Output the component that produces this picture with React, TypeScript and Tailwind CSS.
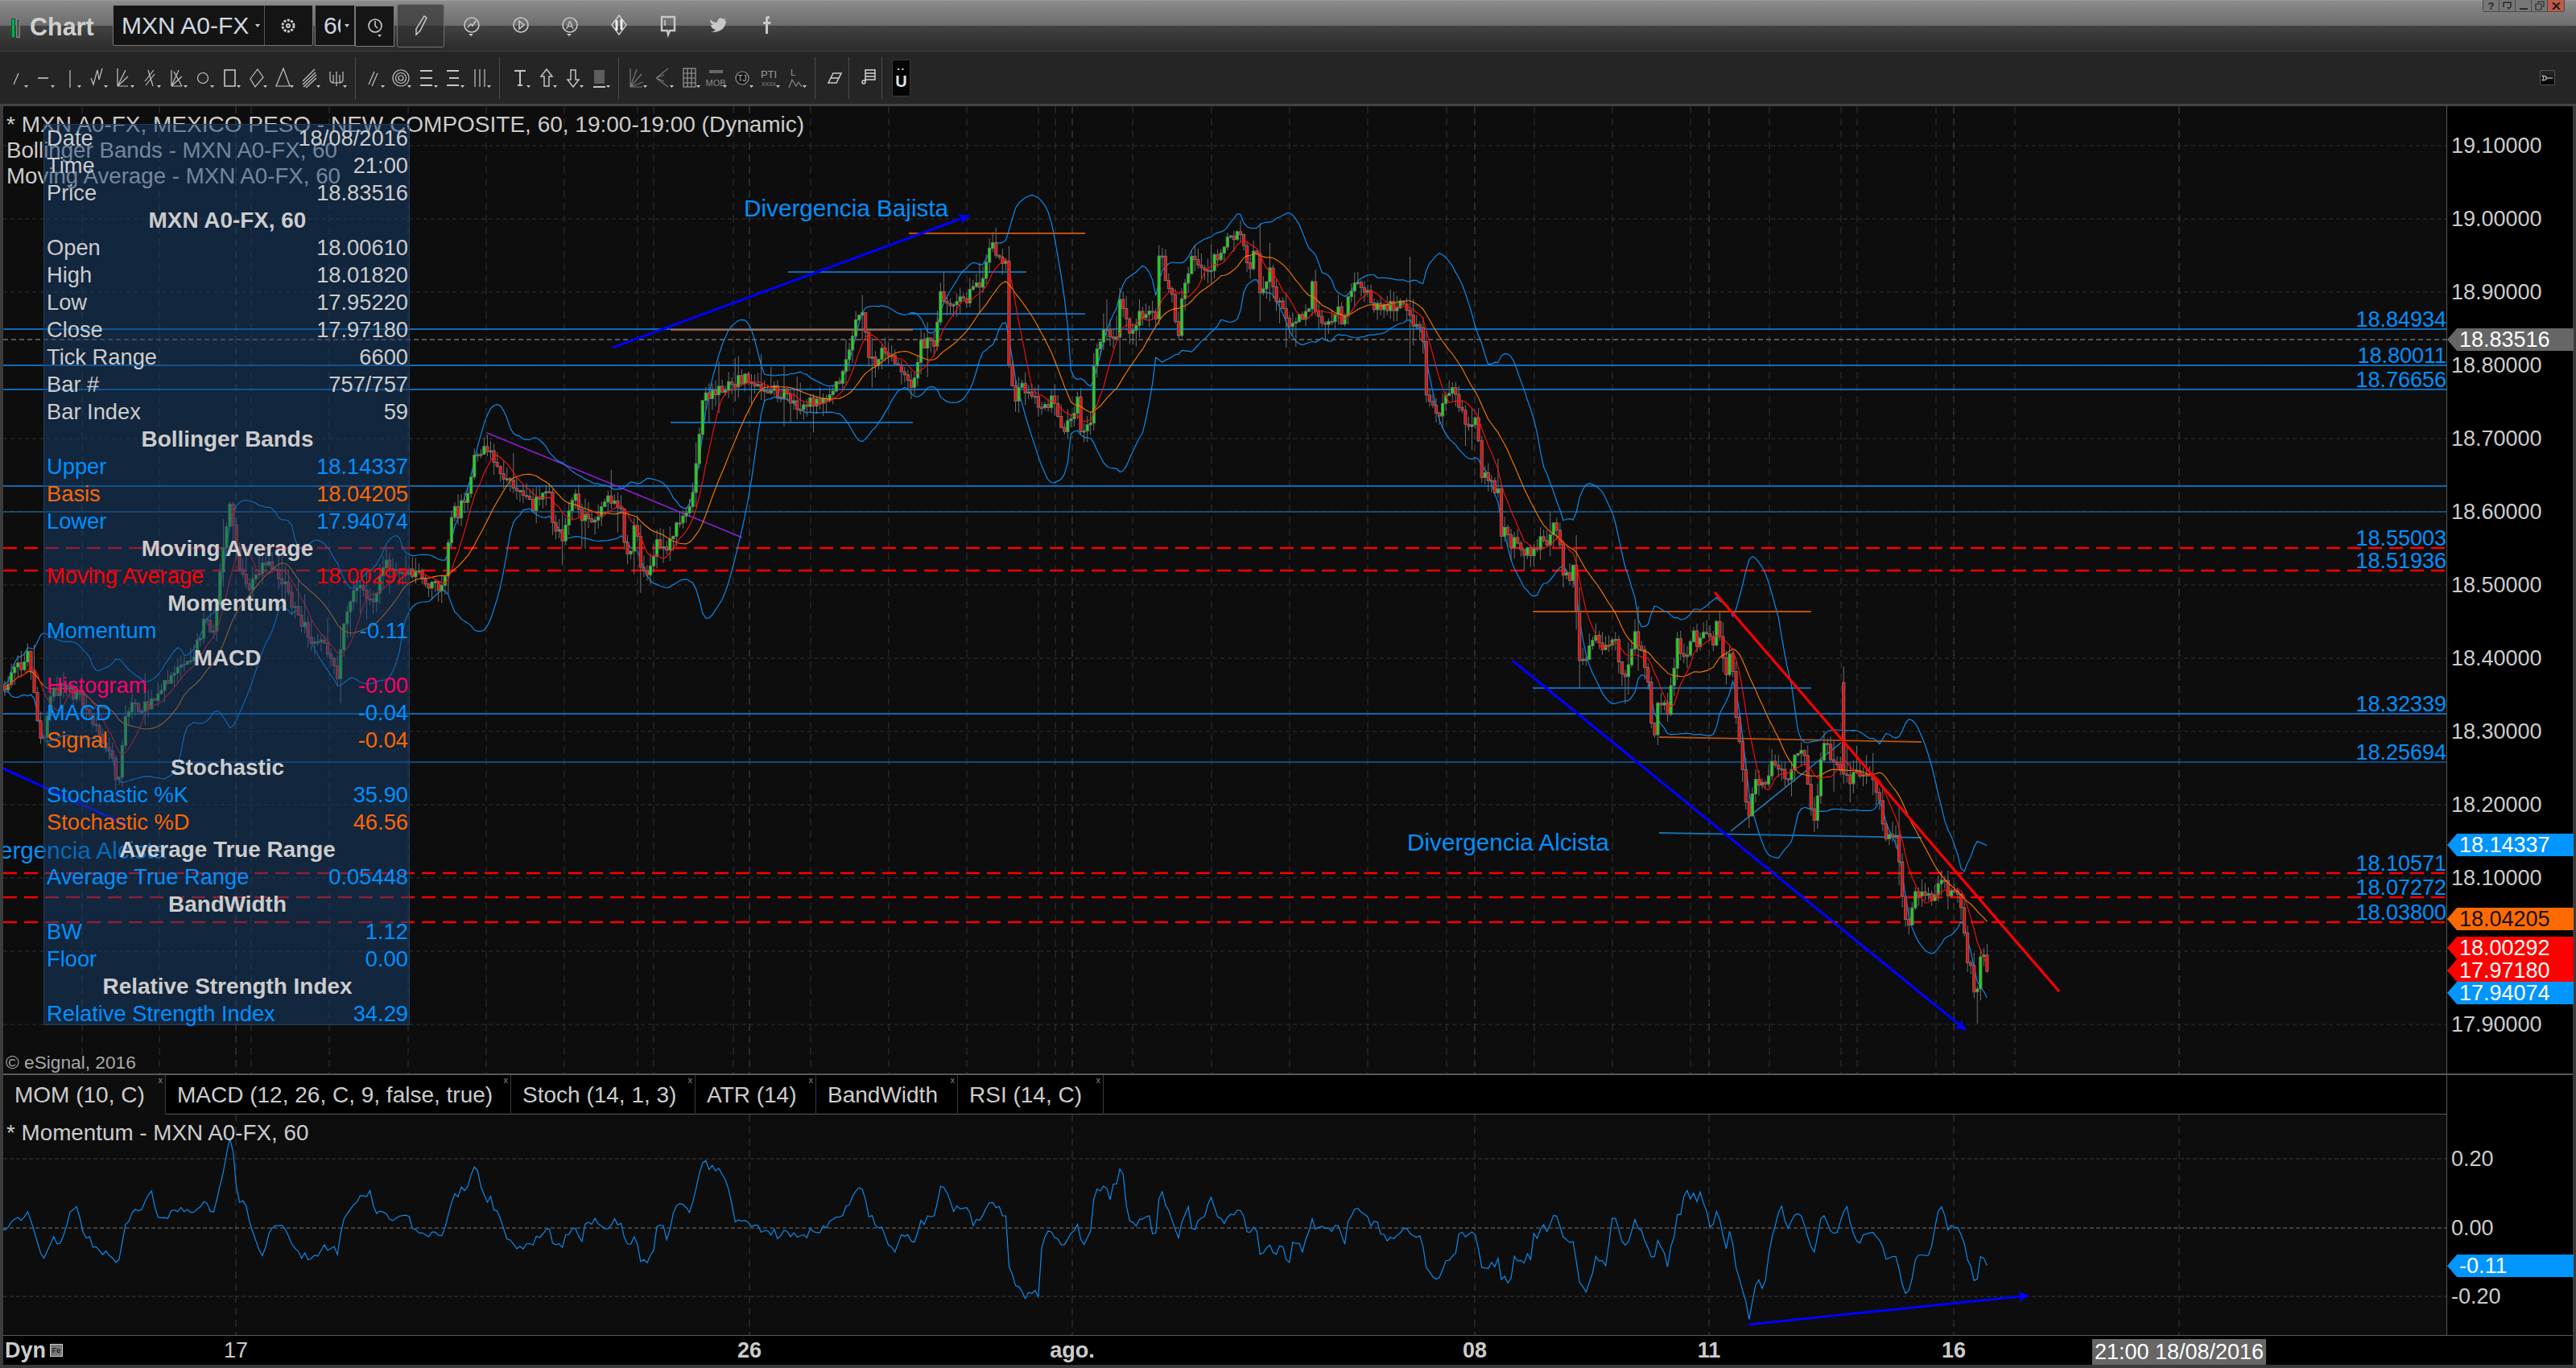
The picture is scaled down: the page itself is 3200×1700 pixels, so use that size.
import React from 'react';

// Close price, read off the picture as [screen x, screen y]
const WAYPOINTS: [number, number][] = [
  [0,860],[8,855],[18,835],[35,815],[45,880],[52,925],[60,880],[65,860],[80,855],[100,870],[128,920],[140,950],[146,975],[157,880],[175,880],[190,870],[205,850],[222,825],[235,830],[255,770],[265,790],[270,740],[286,625],[295,700],[310,730],[330,700],[350,720],[370,765],[390,800],[400,790],[420,840],[430,760],[445,720],[460,750],[480,700],
  [507,710],[520,715],[533,725],[543,730],[553,720],[558,670],[562,625],[570,640],[575,620],[580,615],[590,565],[595,565],[607,558],[612,565],[618,578],[627,590],[633,595],[640,610],[648,612],[655,620],[663,640],[667,620],[675,615],[680,600],[683,620],[688,660],[695,665],[700,670],[708,620],[717,620],[723,640],[730,650],[740,640],[750,625],[757,620],[765,625],[773,635],[777,695],[785,690],[790,627],[793,695],[802,720],[810,700],[817,670],[822,680],[833,675],[842,640],[850,650],[862,605],[867,560],[871,500],
  [880,490],[900,480],[925,470],[945,480],[960,485],[975,490],[995,505],[1005,500],[1013,498],[1028,503],[1036,487],[1048,462],[1056,433],[1064,397],[1074,385],[1076,428],[1084,453],[1094,437],[1107,443],[1122,460],[1135,482],[1143,427],[1153,427],[1163,428],[1166,363],[1173,377],[1184,373],[1201,370],[1219,353],[1230,302],[1240,317],[1250,330],[1253,443],[1260,507],[1268,467],[1276,487],[1286,497],[1298,510],[1309,495],[1321,533],[1332,527],[1339,497],[1344,543],[1355,523],[1360,437],[1365,422],[1372,408],[1388,418],[1390,373],[1403,410],[1413,395],[1423,387],[1436,398],[1438,327],[1446,318],[1449,358],[1459,367],[1462,443],[1467,370],[1472,347],[1480,322],[1490,337],[1503,343],[1508,315],[1518,317],[1523,300],[1536,288],[1543,297],[1551,338],[1559,300],[1566,363],[1577,335],[1587,377],[1602,402],[1625,392],[1629,347],[1635,392],[1648,402],[1655,405],[1661,370],[1668,410],[1673,378],[1681,355],[1699,363],[1709,383],[1724,382],[1740,380],[1753,400],[1767,415],[1773,500],[1778,495],[1783,517],[1790,508],[1802,483],[1807,482],[1812,513],[1818,518],[1827,527],[1835,520],[1840,587],[1852,595],[1855,625],[1860,588],[1863,667],[1872,657],[1877,683],[1885,668],[1893,683],[1903,692],[1913,672],[1920,683],[1932,648],[1937,675],[1940,703],
  [1952,732],[1954,698],[1961,812],[1970,827],[1974,803],[1979,792],[1994,807],[2005,783],[2012,835],[2019,843],[2030,785],[2039,807],[2046,840],[2051,898],[2057,913],[2059,870],[2072,882],[2078,843],[2083,787],[2090,822],[2095,813],[2104,780],[2110,807],[2117,775],[2128,800],[2133,767],[2139,810],[2144,833],[2150,813],[2157,890],[2161,923],[2168,988],[2173,1018],[2179,973],[2188,980],[2196,973],[2201,953],[2215,963],[2222,970],[2229,943],[2240,933],[2249,1000],[2255,1025],[2260,970],[2264,932],[2269,922],[2273,950],[2282,945],[2291,962],[2298,973],[2309,952],[2314,970],[2327,965],[2334,995],[2340,1038],[2357,1045],[2362,1112],[2370,1148],[2375,1130],[2379,1113],[2403,1113],[2412,1092],[2420,1110],[2429,1105],[2438,1128],[2443,1190],[2448,1203],[2452,1237],[2457,1222],[2461,1178],[2468,1207],
];

const STEP = 4.05;
const BAR_COUNT = 610;

let seed = 4711;
const rnd = () => {
  seed = (seed * 1664525 + 1013904223) % 4294967296;
  return seed / 4294967296;
};

const interp = (x: number) => {
  for (let i = 1; i < WAYPOINTS.length; i++) {
    const [x1, y1] = WAYPOINTS[i];
    if (x <= x1) {
      const [x0, y0] = WAYPOINTS[i - 1];
      return y0 + ((y1 - y0) * (x - x0)) / (x1 - x0);
    }
  }
  return WAYPOINTS[WAYPOINTS.length - 1][1];
};

const barX = (i: number) => 2 + i * STEP;

const closes: number[] = [];
for (let i = 0; i < BAR_COUNT; i++) {
  closes.push(interp(barX(i)) + (i === BAR_COUNT - 1 ? 0 : (rnd() - 0.5) * 15));
}

const bars = closes.map((c, i) => {
  const x = barX(i);
  let o = i === 0 ? c + 4 : closes[i - 1];
  if (Math.abs(x - 2289) < 2.1) o = 848; // the long spike on the 11th
  const big = rnd() < 0.15;
  let hi = Math.min(o, c) - rnd() * (big ? 38 : 16);
  let lo = Math.max(o, c) + rnd() * (big ? 38 : 16);
  if (Math.abs(x - 1750) < 2.1) { hi = 319; lo = 452; }
  if (Math.abs(x - 2456) < 2.1) lo = 1272;
  return { x, o, c, hi, lo };
});

const sma = (i: number, n: number) => {
  const from = Math.max(0, i - n + 1);
  const part = closes.slice(from, i + 1);
  return part.reduce((a, b) => a + b, 0) / part.length;
};
const stdev = (i: number, n: number) => {
  const from = Math.max(0, i - n + 1);
  const part = closes.slice(from, i + 1);
  const m = sma(i, n);
  return Math.sqrt(part.reduce((a, b) => a + (b - m) * (b - m), 0) / part.length);
};

const toPoints = (fn: (i: number) => number) =>
  closes.map((_, i) => `${barX(i).toFixed(1)},${fn(i).toFixed(1)}`).join(' ');

const upperLine = toPoints((i) => sma(i, 20) - 2 * stdev(i, 20));
const lowerLine = toPoints((i) => sma(i, 20) + 2 * stdev(i, 20));
const basisLine = toPoints((i) => sma(i, 20));
const maLine = toPoints((i) => sma(i, 8));
// momentum of 10 bars; the spike on the 17th is taller than the closes give
const momLine = toPoints((i) => {
  const dx = barX(i) - 287;
  return 1526 + (closes[i] - closes[Math.max(0, i - 10)]) * 0.47 - 34 * Math.exp(-(dx * dx) / 40);
});

const PRICE_GRID = [181, 272, 363, 454, 545, 636, 727, 818, 909, 1000, 1091, 1182, 1273];
const V_MINOR = [102, 198, 312, 409, 507, 604, 701, 792, 812, 911, 1007, 1104, 1201, 1290, 1311, 1407, 1505, 1602, 1699, 1797, 1906, 2003, 2100, 2198, 2287, 2307, 2405, 2503];
const V_MAJOR = [293, 931, 1332, 1832, 2123, 2427, 2707];
const BLUE_LEVELS = [409, 454, 484, 604, 636, 887, 947];
const RED_LEVELS = [681, 709, 1085, 1115, 1146];

const PRICE_LABELS: [string, number][] = [
  ['19.10000', 181], ['19.00000', 272], ['18.90000', 363], ['18.80000', 454], ['18.70000', 545], ['18.60000', 636],
  ['18.50000', 727], ['18.40000', 818], ['18.30000', 909], ['18.20000', 1000], ['18.10000', 1091], ['17.90000', 1273],
];
const LEVEL_LABELS: [string, number][] = [
  ['18.84934', 409], ['18.80011', 454], ['18.76656', 484], ['18.55003', 681], ['18.51936', 709],
  ['18.32339', 887], ['18.25694', 947], ['18.10571', 1085], ['18.07272', 1115], ['18.03800', 1146],
];

type Row = { label: string; value?: string; color?: string; head?: boolean };

const PANEL_ROWS: Row[] = [
  { label: 'Date', value: '18/08/2016' },
  { label: 'Time', value: '21:00' },
  { label: 'Price', value: '18.83516' },
  { label: 'MXN A0-FX, 60', head: true },
  { label: 'Open', value: '18.00610' },
  { label: 'High', value: '18.01820' },
  { label: 'Low', value: '17.95220' },
  { label: 'Close', value: '17.97180' },
  { label: 'Tick Range', value: '6600' },
  { label: 'Bar #', value: '757/757' },
  { label: 'Bar Index', value: '59' },
  { label: 'Bollinger Bands', head: true },
  { label: 'Upper', value: '18.14337', color: 'text-[#0090ff]' },
  { label: 'Basis', value: '18.04205', color: 'text-[#ff6600]' },
  { label: 'Lower', value: '17.94074', color: 'text-[#0090ff]' },
  { label: 'Moving Average', head: true },
  { label: 'Moving Average', value: '18.00292', color: 'text-[#ff0000]' },
  { label: 'Momentum', head: true },
  { label: 'Momentum', value: '-0.11', color: 'text-[#0090ff]' },
  { label: 'MACD', head: true },
  { label: 'Histogram', value: '-0.00', color: 'text-[#ff0066]' },
  { label: 'MACD', value: '-0.04', color: 'text-[#0090ff]' },
  { label: 'Signal', value: '-0.04', color: 'text-[#ff6600]' },
  { label: 'Stochastic', head: true },
  { label: 'Stochastic %K', value: '35.90', color: 'text-[#0090ff]' },
  { label: 'Stochastic %D', value: '46.56', color: 'text-[#ff6600]' },
  { label: 'Average True Range', head: true },
  { label: 'Average True Range', value: '0.05448', color: 'text-[#0090ff]' },
  { label: 'BandWidth', head: true },
  { label: 'BW', value: '1.12', color: 'text-[#0090ff]' },
  { label: 'Floor', value: '0.00', color: 'text-[#0090ff]' },
  { label: 'Relative Strength Index', head: true },
  { label: 'Relative Strength Index', value: '34.29', color: 'text-[#0090ff]' },
];

const Arrow: React.FC<{ x1: number; y1: number; x2: number; y2: number }> = ({ x1, y1, x2, y2 }) => {
  const a = Math.atan2(y2 - y1, x2 - x1);
  const p = (d: number, s: number) =>
    `${x2 + Math.cos(a) * d - Math.sin(a) * s},${y2 + Math.sin(a) * d + Math.cos(a) * s}`;
  return (
    <g>
      <line x1={x1} y1={y1} x2={x2} y2={y2} stroke="#0000ff" strokeWidth={3.2} />
      <polygon points={`${p(0, 0)} ${p(-13, -7)} ${p(-9, 0)} ${p(-13, 7)}`} fill="#0000ff" />
    </g>
  );
};

const Flag: React.FC<{ text: string; y: number; color: string }> = ({ text, y, color }) => (
  <div
    className={`absolute left-0 w-[157px] h-[28px] pl-[15px] flex items-center text-[27px] leading-none [clip-path:polygon(12px_0,100%_0,100%_100%,12px_100%,0_50%)] ${color}`}
    style={{ top: y }}
  >
    {text}
  </div>
);

const Tool: React.FC<{ children: React.ReactNode; arrow?: boolean }> = ({ children, arrow = true }) => (
  <svg width={33} height={40} viewBox="0 0 33 40" fill="none" stroke="#c4c4c4" strokeWidth={1.2} className="shrink-0">
    {children}
    {arrow && <path d="M22 29h5l-2.500 3z" fill="#cccccc" stroke="none" />}
  </svg>
);

const Sep: React.FC = () => <div className="w-px h-[52px] bg-[#4d4d4d] mx-[4px] shrink-0" />;

const TopIcon: React.FC<{ children: React.ReactNode; arrow?: boolean }> = ({ children, arrow = true }) => (
  <svg width={61} height={44} viewBox="0 0 61 44" fill="none" stroke="#c8c8c8" strokeWidth={1.6} className="shrink-0">
    {children}
    {arrow && <path d="M26 33h6l-3 3z" fill="#cccccc" stroke="none" />}
  </svg>
);

const App: React.FC = () => {
  return (
    <div className="w-[3200px] h-[1700px] flex flex-col bg-[#3a3a3a] overflow-hidden [font-family:'Liberation_Sans',Arial,sans-serif] text-[#cccccc]">
      {/* Window title bar */}
      <div className="relative h-[63px] shrink-0 flex items-start pt-[5px] pl-[14px] border-t border-[#9a9a9a] bg-[linear-gradient(#8c8c8c_0,#6c6c6c_50%,#424242_50%,#2b2b2b_100%)]">
        <div className="w-[5px] h-[24px] mt-[17px] bg-[#00b050] border border-[#0a5a2a]" />
        <div className="w-[5px] h-[24px] mt-[17px] ml-px bg-[#555555] border border-[#888888]" />
        <div className="ml-[12px] mt-[10px] w-[103px] text-[30.500px] leading-[34px] font-bold text-[#d0d0d0]">Chart</div>
        <div className="flex items-center w-[249px] h-[51px] bg-[#141414] border border-[#777777] rounded-[2px]">
          <span className="ml-[10px] w-[160px] text-[30px] leading-none text-[#cfd8e0] whitespace-nowrap">MXN A0-FX</span>
          <svg width={6} height={4} viewBox="0 0 6 4" className="ml-[6px]"><path d="M0 0h6L3 4z" fill="#cccccc" /></svg>
          <div className="ml-[5px] w-px h-full bg-[#555555]" />
          <svg width={58} height={30} viewBox="0 0 58 30" fill="none" stroke="#cccccc" strokeWidth={2}>
            <circle cx={29} cy={15} r={7} strokeDasharray="3 1.500" strokeWidth={3} />
            <circle cx={29} cy={15} r={2} />
          </svg>
        </div>
        <div className="ml-[2px] flex items-center w-[50px] h-[51px] bg-[#141414] border border-[#777777] overflow-hidden">
          <span className="ml-[10px] w-[21px] overflow-hidden text-[30px] leading-none text-[#cfd8e0]">60</span>
          <svg width={6} height={4} viewBox="0 0 6 4" className="ml-[5px]"><path d="M0 0h6L3 4z" fill="#cccccc" /></svg>
        </div>
        <div className="flex items-center justify-center w-[49px] h-[51px] mt-px bg-[#161616] border border-[#777777]">
          <svg width={22} height={28} viewBox="0 0 22 28" fill="none" stroke="#cccccc" strokeWidth={1.6}>
            <circle cx={11} cy={13} r={8} />
            <path d="M11 7v6l3 3" />
            <path d="M14 24h5l-2.500 3z" fill="#cccccc" stroke="none" />
          </svg>
        </div>
        <div className="ml-[3px] flex items-center justify-center w-[59px] h-[54px] -mt-px rounded-[3px] border border-[#707070] bg-[linear-gradient(#4d4d4d_0,#474747_50%,#343434_50%,#2c2c2c_100%)]">
          <svg width={18} height={30} viewBox="0 0 18 30" fill="none" stroke="#d0d0d0" strokeWidth={1.4}>
            <path d="M13 3l3 2-8 16-5 5 0-7z" />
          </svg>
        </div>
        <div className="ml-[4px] flex items-center h-[44px] mt-[3px]">
          <TopIcon>
            <circle cx={30} cy={22} r={9} />
            <path d="M25 25l4-4 2 2 4-6" />
          </TopIcon>
          <TopIcon arrow={false}>
            <circle cx={30} cy={22} r={9} />
            <path d="M28 17l6 5-6 5z" />
          </TopIcon>
          <TopIcon>
            <circle cx={30} cy={22} r={9} />
            <text x={30} y={27} textAnchor="middle" fontSize={14} fill="#c8c8c8" stroke="none">A</text>
          </TopIcon>
          <TopIcon arrow={false}>
            <path d="M30 10l9 12-9 12-9-12z" />
            <path d="M27 16v13M33 15v13" stroke="#eeeeee" strokeWidth={3} />
          </TopIcon>
          <TopIcon arrow={false}>
            <path d="M22 12h16v17h-6l-2 5-1-5h-7z" strokeWidth={2.4} />
            <path d="M26 16v7" />
          </TopIcon>
          <TopIcon arrow={false}>
            <path d="M21 15c3 3 6 4 9 4 0-5 5-7 8-4l3-1-2 3 2 0c-1 9-7 15-20 14 3 0 5-1 7-3-4-1-6-4-6-6l3 0c-3-2-4-4-4-7z" fill="#c8c8c8" stroke="none" />
          </TopIcon>
          <TopIcon arrow={false}>
            <path d="M34 11h-2c-2 0-3 1-3 3v4h-3v3h3v12h3V21h3l.5-3H32v-3c0-1 .5-1 2-1z" fill="#c8c8c8" stroke="none" />
          </TopIcon>
        </div>
        {/* window buttons */}
        <div className="absolute top-[-1px] right-[14px] flex h-[15px] rounded-b-[3px] overflow-hidden border border-t-0 border-[#4a4a4a] text-[#2a2a2a]">
          <div className="w-[20px] flex items-center justify-center bg-[#777777] border-r border-[#4a4a4a] text-[13px] font-bold leading-none">?</div>
          <div className="w-[20px] flex items-center justify-center bg-[#777777] border-r border-[#4a4a4a]">
            <svg width={11} height={10} viewBox="0 0 11 10" fill="none" stroke="#2a2a2a" strokeWidth={1.5}><path d="M1 7V1h9v6" /><path d="M5 7h5l-2.500 3z" fill="#2a2a2a" stroke="none" /></svg>
          </div>
          <div className="w-[20px] flex items-end justify-center pb-[2px] bg-[#777777] border-r border-[#4a4a4a]">
            <div className="w-[10px] h-[2px] bg-[#2a2a2a]" />
          </div>
          <div className="w-[20px] flex items-center justify-center bg-[#777777] border-r border-[#4a4a4a]">
            <svg width={12} height={12} viewBox="0 0 12 12" fill="none" stroke="#2a2a2a" strokeWidth={1.2}><path d="M4 3V1h7v6H9" /><path d="M1 4h7v7H1z" /></svg>
          </div>
          <div className="w-[20px] flex items-center justify-center bg-[#c05a48] text-[#1f1f1f]">
            <svg width={11} height={9} viewBox="0 0 11 9" fill="none" stroke="#222222" strokeWidth={2.2}><path d="M1 0l9 9M10 0L1 9" /></svg>
          </div>
        </div>
      </div>

      {/* Drawing toolbar */}
      <div className="h-[66px] shrink-0 flex items-center pl-[8px] border-t border-[#444444] bg-[#252525]">
        <Tool><path d="M9 28l6-14" /></Tool>
        <Tool><path d="M6 20h13" strokeWidth={1.6} /></Tool>
        <Tool><path d="M13 10v22" /></Tool>
        <Tool><path d="M6 20l3 8 5-18 2 12 4-14" /></Tool>
        <Tool><path d="M6 30l10-20M6 30l13-12M6 30h13" /><path d="M6 8v22" /></Tool>
        <Tool><path d="M7 24l11-14M8 29l11-14M11 10l6 20" /></Tool>
        <Tool><path d="M7 30l9-20M7 30l13-12M7 30h13M7 10v20M10 12l10 18" /></Tool>
        <Tool><circle cx={13} cy={20} r={6.500} /></Tool>
        <Tool><rect x={7} y={10} width={13} height={20} strokeWidth={1.6} /></Tool>
        <Tool><path d="M15 9l7 10-10 12-6-10z" /></Tool>
        <Tool><path d="M14 8l8 22H5z" /></Tool>
        <Tool><path d="M5 24L20 9M5 28L21 13M6 31L22 16M9 32L22 20" /></Tool>
        <Tool><path d="M6 12v10c0 2 2 4 4 4h8c2 0 4-2 4-4V12M14 12v18M10 16v10M18 16v10" /></Tool>
        <Sep />
        <div className="w-[5px] shrink-0" />
        <Tool><path d="M7 28l7-16M11 30l7-16" /></Tool>
        <Tool><circle cx={14} cy={20} r={10} /><circle cx={14} cy={20} r={6.500} /><circle cx={14} cy={20} r={3} /></Tool>
        <Tool><path d="M5 11h15M5 20h15M5 29h15" strokeWidth={1.8} /></Tool>
        <Tool><path d="M5 11h15M8 20h12M5 29h15" strokeWidth={1.8} /></Tool>
        <Tool><path d="M7 9v22M13 9v22M19 9v22" /></Tool>
        <Sep />
        <div className="w-[7px] shrink-0" />
        <Tool><path d="M7 11h14M14 11v18M11 29h6" strokeWidth={2} /></Tool>
        <Tool><path d="M14 9l7 9h-4v12h-6V18H7z" strokeWidth={1.5} /></Tool>
        <Tool><path d="M14 31l7-9h-4V10h-6v12H7z" strokeWidth={1.5} /></Tool>
        <Tool><rect x={7} y={10} width={13} height={17} fill="#5e5e5e" stroke="none" /><path d="M6 31h15" strokeWidth={2} /></Tool>
        <Sep />
        <div className="w-[4px] shrink-0" />
        <Tool><g stroke="#777777"><path d="M6 8v23h15M6 31l8-22M6 31l14-16M6 31l16-6" /></g></Tool>
        <Tool><g stroke="#777777"><path d="M5 20L20 8M5 20l15 11M5 20l10-4M5 20l10 4" /></g></Tool>
        <Tool><g stroke="#999999"><rect x={6} y={8} width={15} height={23} /><path d="M6 14h15M6 20h15M6 26h15M11 8v23M16 8v23" /></g></Tool>
        <Tool>
          <rect x={5} y={10} width={17} height={4} fill="#666666" stroke="none" />
          <text x={13} y={30} textAnchor="middle" fontSize={11} fill="#8a8a8a" stroke="none">MOB</text>
        </Tool>
        <Tool>
          <circle cx={13} cy={20} r={8} fill="#141414" stroke="#999999" />
          <text x={13} y={24} textAnchor="middle" fontSize={10} fill="#bbbbbb" stroke="none">TJ</text>
        </Tool>
        <Tool>
          <text x={13} y={20} textAnchor="middle" fontSize={13} fill="#999999" stroke="none">PTI</text>
          <text x={13} y={30} textAnchor="middle" fontSize={9} fill="#777777" stroke="none">xxxx</text>
        </Tool>
        <Tool>
          <text x={7} y={17} fontSize={11} fill="#999999" stroke="none">L</text>
          <g stroke="#888888"><path d="M5 32l4-10 5 8 3-5 4 6" /></g>
        </Tool>
        <Sep />
        <svg width={22} height={40} viewBox="0 0 22 40" fill="none" stroke="#c8c8c8" strokeWidth={1.6} className="shrink-0 ml-[9px] mr-[2px]">
          <path d="M3 26l6-12h10l-6 12z" /><path d="M6 20h10" />
        </svg>
        <Sep />
        <svg width={24} height={40} viewBox="0 0 24 40" fill="none" stroke="#d8d8d8" strokeWidth={1.4} className="shrink-0 ml-[8px]">
          <path d="M8 10h12v12H8zM8 14h12M8 18h12" /><circle cx={6} cy={25} r={2} /><path d="M8 24v-3" />
        </svg>
        <Sep />
        <div className="ml-[8px] w-[23px] h-[46px] flex flex-col items-center justify-center rounded-[2px] border border-[#3a3a3a] bg-[#050505] text-[20px] font-bold text-[#e0e0e0]">
          <span className="text-[13px] leading-[8px] tracking-[1px]">··</span>
          <span className="leading-[22px]">U</span>
        </div>
        <div className="ml-auto mr-[26px] w-[19px] h-[19px] flex items-center justify-center rounded-[2px] border border-[#555555] bg-[linear-gradient(#2a2a2a,#000000)]">
          <svg width={15} height={10} viewBox="0 0 15 10" fill="none" stroke="#dddddd" strokeWidth={1}><path d="M1 2l5 1v4L1 8l2-3zM6 5h8" /></svg>
        </div>
      </div>

      <div className="h-[3px] shrink-0 bg-[#444444]" />

      <div className="flex-1 flex flex-col border-x-4 border-[#3c3c3c] min-h-0">
        {/* Price pane */}
        <div className="h-[1202px] shrink-0 flex">
          <div className="relative w-[3035px] h-full overflow-hidden bg-[#0d0d0d]">
            <svg width={3035} height={1202} viewBox="4 132 3035 1202" className="block">
              {PRICE_GRID.map((y) => (
                <line key={y} x1={4} x2={3039} y1={y} y2={y} stroke="#303030" strokeWidth={1} strokeDasharray="5 4" />
              ))}
              {V_MINOR.map((x) => (
                <line key={x} x1={x} x2={x} y1={132} y2={1334} stroke="#333333" strokeWidth={1} strokeDasharray="9 6" />
              ))}
              {V_MAJOR.map((x) => (
                <line key={x} x1={x} x2={x} y1={132} y2={1334} stroke="#484848" strokeWidth={1} strokeDasharray="9 6" />
              ))}
              <line x1={4} x2={3039} y1={422} y2={422} stroke="#707070" strokeWidth={1.4} strokeDasharray="6 4" />
              {BLUE_LEVELS.map((y) => (
                <line key={y} x1={4} x2={3039} y1={y} y2={y} stroke={y === 636 ? '#1f7fc8' : '#0a8af0'} strokeWidth={y === 636 || y === 947 ? 1.2 : 1.6} />
              ))}
              {RED_LEVELS.map((y) => (
                <line key={y} x1={4} x2={3039} y1={y} y2={y} stroke="#ff0000" strokeWidth={2.4} strokeDasharray="17 9" />
              ))}
              {/* trend lines from the analyst */}
              <line x1={979} x2={1275} y1={338} y2={338} stroke="#0a8af0" strokeWidth={1.6} />
              <line x1={1129} x2={1348} y1={290} y2={290} stroke="#ff6600" strokeWidth={1.6} />
              <line x1={1129} x2={1348} y1={390} y2={390} stroke="#0a8af0" strokeWidth={1.6} />
              <line x1={833} x2={1134} y1={410} y2={410} stroke="#ff6600" strokeWidth={1.6} />
              <line x1={833} x2={1134} y1={525} y2={525} stroke="#0a8af0" strokeWidth={1.6} />
              <line x1={1904} x2={2250} y1={760} y2={760} stroke="#ff6600" strokeWidth={1.6} />
              <line x1={1904} x2={2250} y1={855} y2={855} stroke="#0a8af0" strokeWidth={1.6} />
              <line x1={2061} x2={2387} y1={916} y2={922} stroke="#b05010" strokeWidth={1.8} />
              <line x1={2061} x2={2387} y1={1035} y2={1041} stroke="#1670b0" strokeWidth={1.8} />
              <line x1={2150} x2={2287} y1={1033} y2={923} stroke="#1f7fc0" strokeWidth={1.6} />
              <line x1={605} x2={922} y1={538} y2={668} stroke="#8a1fd0" strokeWidth={1.6} />

              <polyline points={upperLine} fill="none" stroke="#0a8af0" strokeWidth={1.2} />
              <polyline points={lowerLine} fill="none" stroke="#0a8af0" strokeWidth={1.2} />
              {bars.map((b) => (
                <line key={`w${b.x}`} x1={b.x} x2={b.x} y1={b.hi} y2={b.lo} stroke="#6e6e6e" strokeWidth={1} />
              ))}
              {bars.map((b) => (
                <rect
                  key={`b${b.x}`}
                  x={b.x - 1.6}
                  y={Math.min(b.o, b.c)}
                  width={3.2}
                  height={Math.max(1.5, Math.abs(b.c - b.o))}
                  fill={b.c < b.o ? '#0ce60c' : '#ff0000'}
                  stroke="#707070"
                  strokeWidth={1}
                />
              ))}
              <polyline points={basisLine} fill="none" stroke="#ff7a00" strokeWidth={1.1} />
              <polyline points={maLine} fill="none" stroke="#ff1010" strokeWidth={1.1} />

              <Arrow x1={761} y1={432} x2={1204} y2={268} />
              <Arrow x1={1879} y1={821} x2={2442} y2={1280} />
              <line x1={4} y1={955} x2={157} y2={1025} stroke="#0000ff" strokeWidth={3.2} />
              <line x1={2130} y1={736} x2={2558} y2={1232} stroke="#ff0000" strokeWidth={3.2} />
            </svg>

            <div className="absolute left-[4px] top-[7px] leading-[32px] whitespace-nowrap">
              <div className="text-[28px]">* MXN A0-FX, MEXICO PESO - NEW COMPOSITE, 60, 19:00-19:00 (Dynamic)</div>
              <div className="text-[27.700px]">Bollinger Bands - MXN A0-FX, 60</div>
              <div className="text-[27.700px]">Moving Average - MXN A0-FX, 60</div>
            </div>

            <div className="absolute left-[1744px] top-[900px] text-[29.700px] leading-[30px] text-[#0090ff] whitespace-nowrap">Divergencia Alcista</div>
            <div className="absolute left-[-48px] top-[910px] text-[29.700px] leading-[30px] text-[#0090ff] whitespace-nowrap">Divergencia Alcista</div>
            <div className="absolute left-[920px] top-[112px] text-[29.700px] leading-[30px] text-[#0090ff] whitespace-nowrap">Divergencia Bajista</div>

            {LEVEL_LABELS.map(([t, y]) => (
              <div key={t} className="absolute right-0 text-[27px] leading-[28px] text-[#0090ff]" style={{ top: y - 132 - 26 }}>
                {t}
              </div>
            ))}

            <div className="absolute left-[50px] top-[22px] w-[455px] h-[1120px] pl-[3px] pr-px bg-[#173f6d]/50 border border-[#1f3f60]">
              {PANEL_ROWS.map((r, i) =>
                r.head ? (
                  <div key={i} className="h-[34px] flex items-center justify-center text-[27.900px] leading-none font-bold whitespace-nowrap">
                    {r.label}
                  </div>
                ) : (
                  <div key={i} className={`h-[34px] flex items-center justify-between text-[27.300px] leading-none whitespace-nowrap ${r.color ?? ''}`}>
                    <span>{r.label}</span>
                    <span>{r.value}</span>
                  </div>
                ),
              )}
            </div>

            <div className="absolute left-[3px] top-[1175px] text-[22.700px] leading-[26px] text-[#a8a8a8]">© eSignal, 2016</div>
          </div>

          <div className="relative flex-1 border-l border-[#5a5a5a] bg-black">
            {PRICE_LABELS.map(([t, y]) => (
              <div key={t} className="absolute left-[5px] text-[27px] leading-[28px]" style={{ top: y - 132 - 14 }}>
                {t}
              </div>
            ))}
            <Flag text="18.83516" y={276} color="bg-[#666666] text-white" />
            <Flag text="18.14337" y={904} color="bg-[#0095ff] text-white" />
            <Flag text="18.04205" y={996} color="bg-[#ff6a00] text-[#111111]" />
            <Flag text="18.00292" y={1032} color="bg-[#ff0000] text-white" />
            <Flag text="17.97180" y={1060} color="bg-[#ff0000] text-white" />
            <Flag text="17.94074" y={1088} color="bg-[#0095ff] text-white" />
          </div>
        </div>

        <div className="h-[2px] shrink-0 bg-[#5a5a5a]" />

        {/* Study tabs */}
        <div className="h-[49px] shrink-0 flex bg-black">
          <div className="w-[3035px] flex border-b border-[#5a5a5a]">
            {[
              { label: 'MOM (10, C)', w: 'w-[202px]', active: true },
              { label: 'MACD (12, 26, C, 9, false, true)', w: 'w-[429px]' },
              { label: 'Stoch (14, 1, 3)', w: 'w-[229px]' },
              { label: 'ATR (14)', w: 'w-[150px]' },
              { label: 'BandWidth', w: 'w-[176px]' },
              { label: 'RSI (14, C)', w: 'w-[181px]' },
            ].map((t) => (
              <div
                key={t.label}
                className={`relative h-[49px] flex items-center pl-[14px] text-[28px] leading-none whitespace-nowrap border-r border-[#3a3a3a] ${t.w} ${t.active ? 'bg-[#0d0d0d] border-[#0d0d0d] -mb-px' : ''}`}
              >
                {t.label}
                <span className="absolute right-[3px] top-[1px] text-[11px] leading-none text-[#888888]">x</span>
              </div>
            ))}
          </div>
          <div className="flex-1 border-l border-[#5a5a5a]" />
        </div>

        {/* Momentum pane */}
        <div className="h-[274px] shrink-0 flex">
          <div className="relative w-[3035px] h-full overflow-hidden bg-[#0d0d0d]">
            <svg width={3035} height={274} viewBox="4 1385 3035 274" className="block">
              {V_MAJOR.map((x) => (
                <line key={x} x1={x} x2={x} y1={1385} y2={1659} stroke="#3a3a3a" strokeWidth={1} strokeDasharray="9 6" />
              ))}
              <line x1={4} x2={3039} y1={1440} y2={1440} stroke="#3a3a3a" strokeWidth={1} strokeDasharray="5 3" />
              <line x1={4} x2={3039} y1={1611} y2={1611} stroke="#3a3a3a" strokeWidth={1} strokeDasharray="5 3" />
              <line x1={4} x2={3039} y1={1526} y2={1526} stroke="#777777" strokeWidth={1} strokeDasharray="5 3" />
              <polyline points={momLine} fill="none" stroke="#0a8af0" strokeWidth={1.2} />
              <Arrow x1={2172} y1={1646} x2={2520} y2={1610} />
            </svg>
            <div className="absolute left-[4px] top-[8px] text-[27.800px] leading-[30px] whitespace-nowrap">* Momentum - MXN A0-FX, 60</div>
          </div>
          <div className="relative flex-1 border-l border-[#5a5a5a] bg-black">
            {[['0.20', 1440], ['0.00', 1526], ['-0.20', 1611]].map(([t, y]) => (
              <div key={t} className="absolute left-[5px] text-[27px] leading-[28px]" style={{ top: Number(y) - 1385 - 14 }}>
                {t}
              </div>
            ))}
            <Flag text="-0.11" y={174} color="bg-[#0095ff] text-white" />
          </div>
        </div>

        <div className="h-px shrink-0 bg-[#5a5a5a]" />

        {/* Time axis */}
        <div className="relative h-[36px] shrink-0 bg-black text-[27px] leading-[36px]">
          <div className="absolute left-[2px] top-0 font-bold flex items-center">
            Dyn
            <span className="ml-[5px] w-[16px] h-[16px] bg-[#777777] border border-[#cccccc] text-[9px] leading-[14px] text-center font-normal text-black">Fe</span>
          </div>
          {[
            { t: '17', x: 289, b: false },
            { t: '26', x: 927, b: true },
            { t: 'ago.', x: 1328, b: true },
            { t: '08', x: 1828, b: true },
            { t: '11', x: 2119, b: true },
            { t: '16', x: 2423, b: true },
          ].map((l) => (
            <span key={l.t} className={`absolute top-0 -translate-x-1/2 ${l.b ? 'font-bold' : ''}`} style={{ left: l.x }}>
              {l.t}
            </span>
          ))}
          <span className="absolute top-[4px] left-[2595px] w-[216px] h-[32px] bg-[#666666] text-white text-center leading-[32px] whitespace-nowrap">
            21:00 18/08/2016
          </span>
        </div>
      </div>
    </div>
  );
};

export default App;
